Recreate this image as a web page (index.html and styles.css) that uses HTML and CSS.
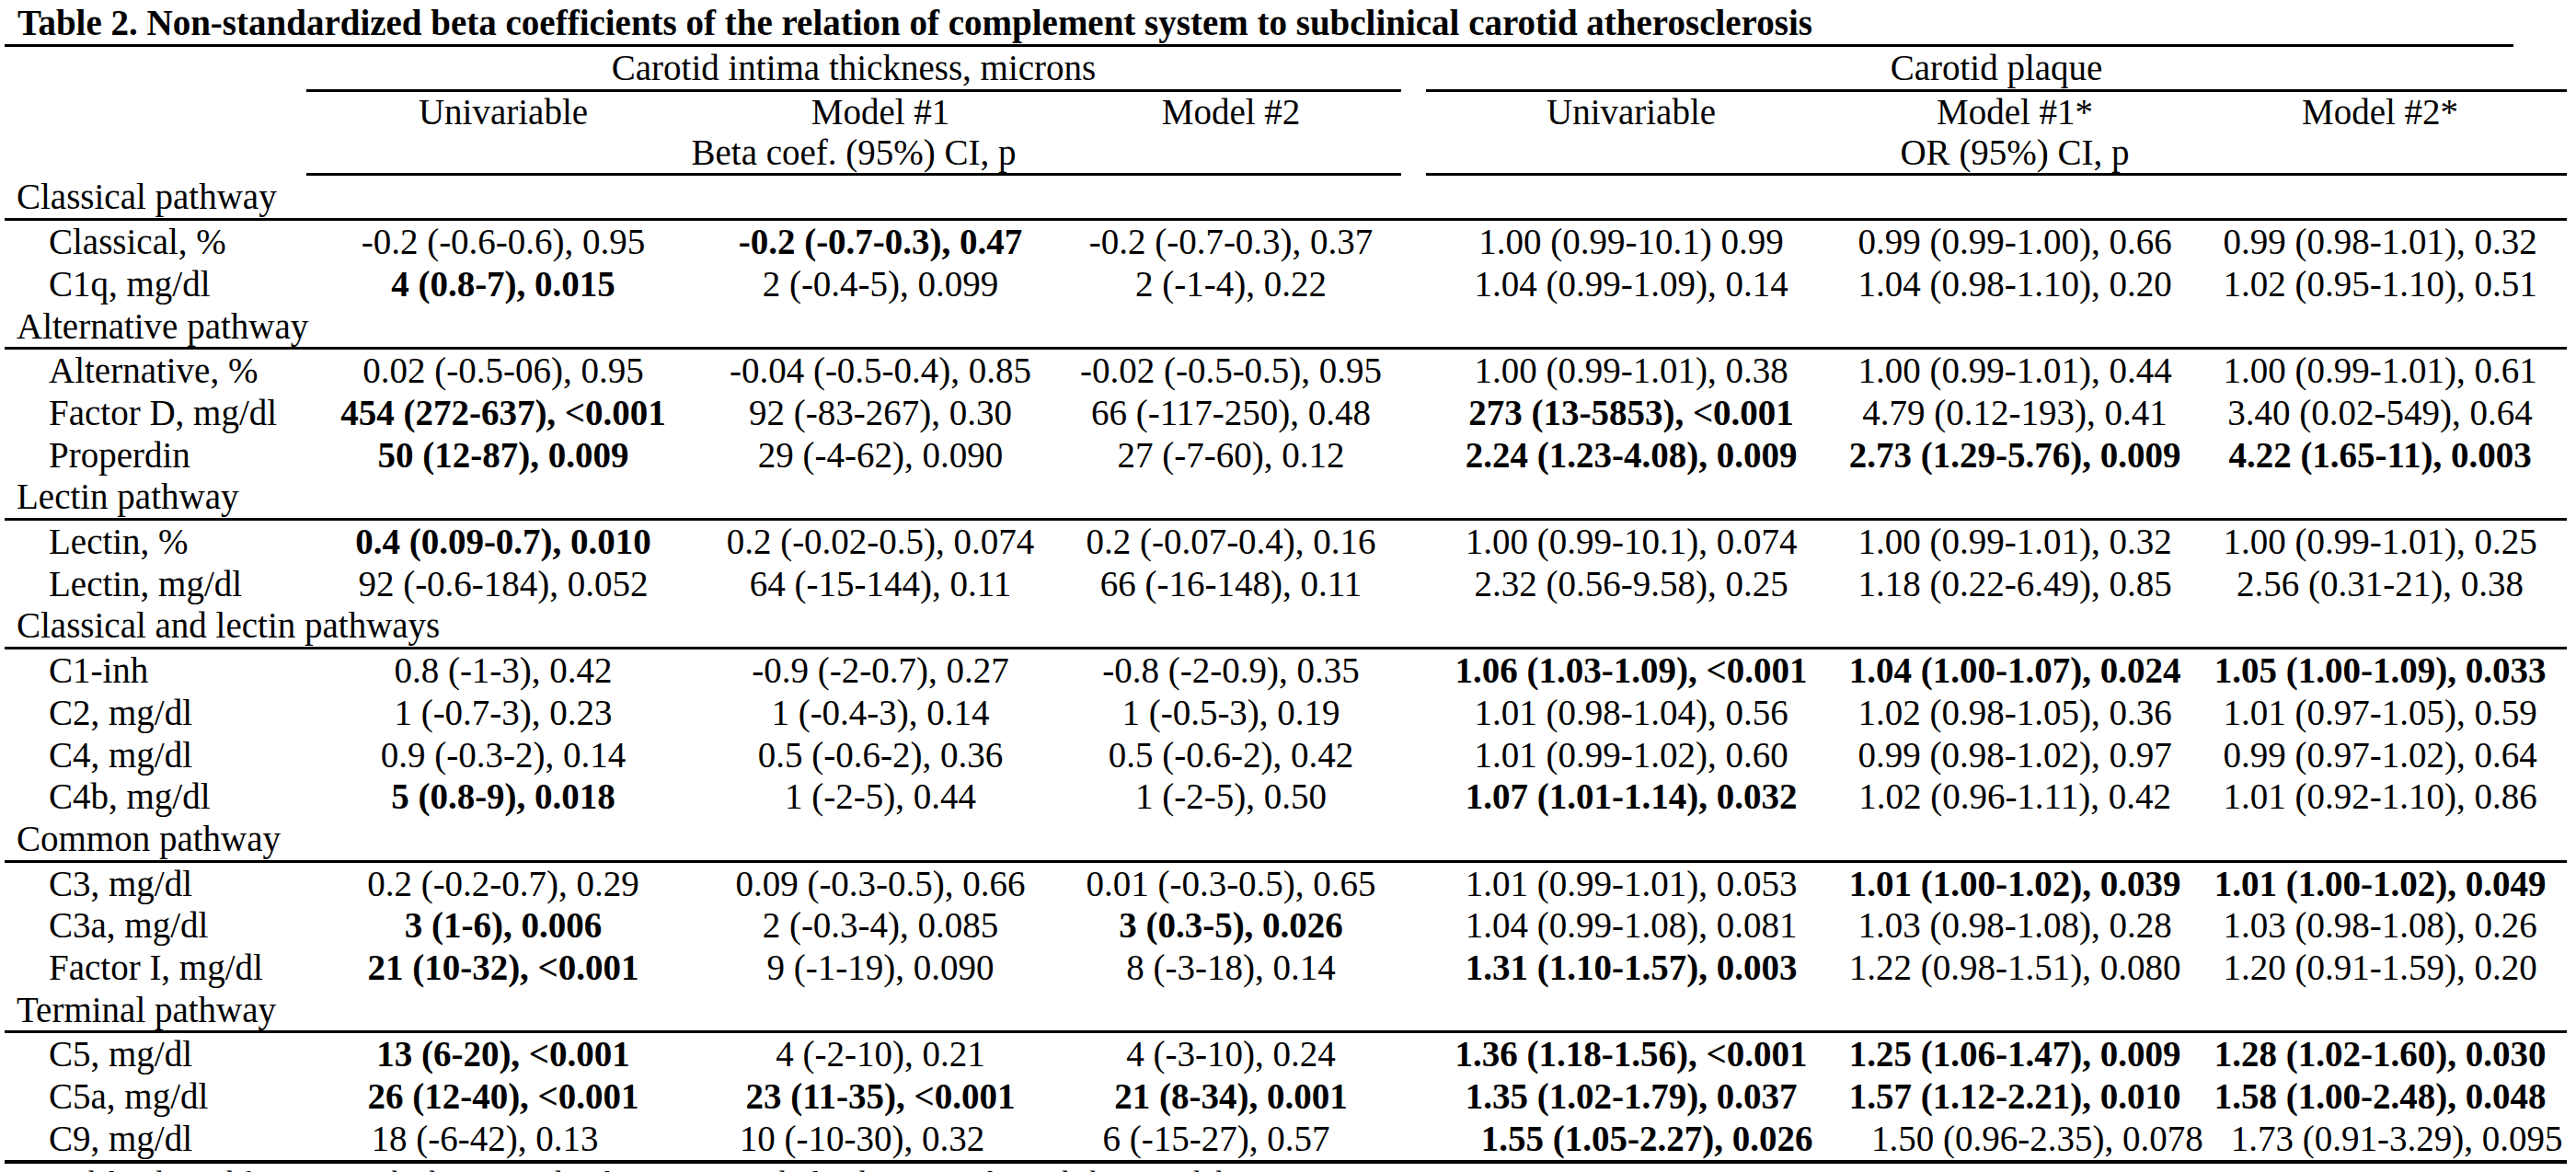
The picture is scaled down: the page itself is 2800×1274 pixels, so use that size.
FILE: index.html
```html
<!DOCTYPE html>
<html lang="en">
<head>
<meta charset="utf-8">
<title>Table 2</title>
<link rel="stylesheet" href="styles.css">
</head>
<body>
<div class="title">Table 2. Non-standardized beta coefficients of the relation of complement system to subclinical carotid atherosclerosis</div>
<table class="tbl">
  <colgroup>
    <col class="w-label"><col class="w-c1"><col class="w-c2"><col class="w-c3"><col class="w-gap"><col class="w-c4"><col class="w-c5"><col class="w-c6">
  </colgroup>
  <tbody>
    <tr class="grp">
      <td></td><td colspan="3" class="g">Carotid intima thickness, microns</td><td></td><td colspan="3" class="g">Carotid plaque</td>
    </tr>
    <tr class="colhead">
      <td></td><td>Univariable</td><td>Model #1</td><td>Model #2</td><td></td><td>Univariable</td><td>Model #1*</td><td>Model #2*</td>
    </tr>
    <tr class="sub">
      <td></td><td colspan="3" class="g">Beta coef. (95%) CI, p</td><td></td><td class="g"></td><td class="g">OR (95%) CI, p</td><td class="g"></td>
    </tr>
    <tr class="sec"><td class="sh">Classical pathway</td><td></td><td></td><td></td><td></td><td></td><td></td><td></td></tr>
    <tr><td class="lb">Classical, %</td><td>-0.2 (-0.6-0.6), 0.95</td><td class="b">-0.2 (-0.7-0.3), 0.47</td><td>-0.2 (-0.7-0.3), 0.37</td><td></td><td>1.00 (0.99-10.1) 0.99</td><td>0.99 (0.99-1.00), 0.66</td><td>0.99 (0.98-1.01), 0.32</td></tr>
    <tr><td class="lb">C1q, mg/dl</td><td class="b">4 (0.8-7), 0.015</td><td>2 (-0.4-5), 0.099</td><td>2 (-1-4), 0.22</td><td></td><td>1.04 (0.99-1.09), 0.14</td><td>1.04 (0.98-1.10), 0.20</td><td>1.02 (0.95-1.10), 0.51</td></tr>
    <tr class="sec"><td class="sh">Alternative pathway</td><td></td><td></td><td></td><td></td><td></td><td></td><td></td></tr>
    <tr><td class="lb">Alternative, %</td><td>0.02 (-0.5-06), 0.95</td><td>-0.04 (-0.5-0.4), 0.85</td><td>-0.02 (-0.5-0.5), 0.95</td><td></td><td>1.00 (0.99-1.01), 0.38</td><td>1.00 (0.99-1.01), 0.44</td><td>1.00 (0.99-1.01), 0.61</td></tr>
    <tr><td class="lb">Factor D, mg/dl</td><td class="b">454 (272-637), &lt;0.001</td><td>92 (-83-267), 0.30</td><td>66 (-117-250), 0.48</td><td></td><td class="b">273 (13-5853), &lt;0.001</td><td>4.79 (0.12-193), 0.41</td><td>3.40 (0.02-549), 0.64</td></tr>
    <tr><td class="lb">Properdin</td><td class="b">50 (12-87), 0.009</td><td>29 (-4-62), 0.090</td><td>27 (-7-60), 0.12</td><td></td><td class="b">2.24 (1.23-4.08), 0.009</td><td class="b">2.73 (1.29-5.76), 0.009</td><td class="b">4.22 (1.65-11), 0.003</td></tr>
    <tr class="sec"><td class="sh">Lectin pathway</td><td></td><td></td><td></td><td></td><td></td><td></td><td></td></tr>
    <tr><td class="lb">Lectin, %</td><td class="b">0.4 (0.09-0.7), 0.010</td><td>0.2 (-0.02-0.5), 0.074</td><td>0.2 (-0.07-0.4), 0.16</td><td></td><td>1.00 (0.99-10.1), 0.074</td><td>1.00 (0.99-1.01), 0.32</td><td>1.00 (0.99-1.01), 0.25</td></tr>
    <tr><td class="lb">Lectin, mg/dl</td><td>92 (-0.6-184), 0.052</td><td>64 (-15-144), 0.11</td><td>66 (-16-148), 0.11</td><td></td><td>2.32 (0.56-9.58), 0.25</td><td>1.18 (0.22-6.49), 0.85</td><td>2.56 (0.31-21), 0.38</td></tr>
    <tr class="sec"><td class="sh">Classical and lectin pathways</td><td></td><td></td><td></td><td></td><td></td><td></td><td></td></tr>
    <tr><td class="lb">C1-inh</td><td>0.8 (-1-3), 0.42</td><td>-0.9 (-2-0.7), 0.27</td><td>-0.8 (-2-0.9), 0.35</td><td></td><td class="b">1.06 (1.03-1.09), &lt;0.001</td><td class="b">1.04 (1.00-1.07), 0.024</td><td class="b">1.05 (1.00-1.09), 0.033</td></tr>
    <tr><td class="lb">C2, mg/dl</td><td>1 (-0.7-3), 0.23</td><td>1 (-0.4-3), 0.14</td><td>1 (-0.5-3), 0.19</td><td></td><td>1.01 (0.98-1.04), 0.56</td><td>1.02 (0.98-1.05), 0.36</td><td>1.01 (0.97-1.05), 0.59</td></tr>
    <tr><td class="lb">C4, mg/dl</td><td>0.9 (-0.3-2), 0.14</td><td>0.5 (-0.6-2), 0.36</td><td>0.5 (-0.6-2), 0.42</td><td></td><td>1.01 (0.99-1.02), 0.60</td><td>0.99 (0.98-1.02), 0.97</td><td>0.99 (0.97-1.02), 0.64</td></tr>
    <tr><td class="lb">C4b, mg/dl</td><td class="b">5 (0.8-9), 0.018</td><td>1 (-2-5), 0.44</td><td>1 (-2-5), 0.50</td><td></td><td class="b">1.07 (1.01-1.14), 0.032</td><td>1.02 (0.96-1.11), 0.42</td><td>1.01 (0.92-1.10), 0.86</td></tr>
    <tr class="sec"><td class="sh">Common pathway</td><td></td><td></td><td></td><td></td><td></td><td></td><td></td></tr>
    <tr><td class="lb">C3, mg/dl</td><td>0.2 (-0.2-0.7), 0.29</td><td>0.09 (-0.3-0.5), 0.66</td><td>0.01 (-0.3-0.5), 0.65</td><td></td><td>1.01 (0.99-1.01), 0.053</td><td class="b">1.01 (1.00-1.02), 0.039</td><td class="b">1.01 (1.00-1.02), 0.049</td></tr>
    <tr><td class="lb">C3a, mg/dl</td><td class="b">3 (1-6), 0.006</td><td>2 (-0.3-4), 0.085</td><td class="b">3 (0.3-5), 0.026</td><td></td><td>1.04 (0.99-1.08), 0.081</td><td>1.03 (0.98-1.08), 0.28</td><td>1.03 (0.98-1.08), 0.26</td></tr>
    <tr><td class="lb">Factor I, mg/dl</td><td class="b">21 (10-32), &lt;0.001</td><td>9 (-1-19), 0.090</td><td>8 (-3-18), 0.14</td><td></td><td class="b">1.31 (1.10-1.57), 0.003</td><td>1.22 (0.98-1.51), 0.080</td><td>1.20 (0.91-1.59), 0.20</td></tr>
    <tr class="sec"><td class="sh">Terminal pathway</td><td></td><td></td><td></td><td></td><td></td><td></td><td></td></tr>
    <tr><td class="lb">C5, mg/dl</td><td class="b">13 (6-20), &lt;0.001</td><td>4 (-2-10), 0.21</td><td>4 (-3-10), 0.24</td><td></td><td class="b">1.36 (1.18-1.56), &lt;0.001</td><td class="b">1.25 (1.06-1.47), 0.009</td><td class="b">1.28 (1.02-1.60), 0.030</td></tr>
    <tr><td class="lb">C5a, mg/dl</td><td class="b">26 (12-40), &lt;0.001</td><td class="b">23 (11-35), &lt;0.001</td><td class="b">21 (8-34), 0.001</td><td></td><td class="b">1.35 (1.02-1.79), 0.037</td><td class="b">1.57 (1.12-2.21), 0.010</td><td class="b">1.58 (1.00-2.48), 0.048</td></tr>
    <tr class="last"><td class="lb">C9, mg/dl</td><td class="nudge-l">18 (-6-42), 0.13</td><td class="nudge-l">10 (-10-30), 0.32</td><td class="nudge-l2">6 (-15-27), 0.57</td><td></td><td class="b nudge-r4">1.55 (1.05-2.27), 0.026</td><td class="nudge-r5">1.50 (0.96-2.35), 0.078</td><td class="nudge-r6">1.73 (0.91-3.29), 0.095</td></tr>
  </tbody>
</table>
<p class="foot">* Models adjusted for age, sex, body mass index, hypertension, dyslipidemia, smoking, diabetes and disease activity</p>
</body>
</html>
```
FILE: styles.css
```css
html, body {
  background: #fff;
}
body {
  margin: 0;
  padding: 0 0 0 5px;
  font-family: "Liberation Serif", "Times New Roman", serif;
  font-size: 39px;
  color: #000;
}
.title {
  box-sizing: border-box;
  width: 2727px;
  padding: 2px 0 0 14px;
  line-height: 46px;
  font-weight: bold;
  white-space: nowrap;
  border-bottom: 3px solid #000;
}
.tbl {
  border-collapse: separate;
  border-spacing: 0;
  table-layout: fixed;
  width: 2785px;
}
.w-label { width: 328px; }
.w-c1 { width: 428px; }
.w-c2 { width: 392px; }
.w-c3 { width: 370px; }
.w-gap { width: 27px; }
.w-c4 { width: 446px; }
.w-c5 { width: 388px; }
.w-c6 { width: 406px; }
.tbl td {
  padding: 0;
  line-height: 45.7px;
  text-align: center;
  white-space: nowrap;
  vertical-align: top;
}
.grp .g {
  border-bottom: 3px solid #000;
}
.colhead td {
  line-height: 43px;
}
.sub .g {
  border-bottom: 3px solid #000;
}
.sec td {
  border-bottom: 3px solid #000;
}
.tbl td.sh {
  text-align: left;
  padding-left: 13px;
}
.tbl td.lb {
  text-align: left;
  padding-left: 48px;
}
.b {
  font-weight: bold;
}
.last td {
  border-bottom: 4px solid #000;
}
.tbl td.nudge-l {
  padding-right: 40px;
}
.tbl td.nudge-l2 {
  padding-right: 32px;
}
.tbl td.nudge-r4 {
  padding-left: 34px;
}
.tbl td.nudge-r5 {
  padding-left: 38px;
}
.tbl td.nudge-r6 {
  padding-left: 36px;
}
.foot {
  margin: 3px 0 0 14px;
  font-size: 32px;
  line-height: 32px;
  white-space: nowrap;
}
```
